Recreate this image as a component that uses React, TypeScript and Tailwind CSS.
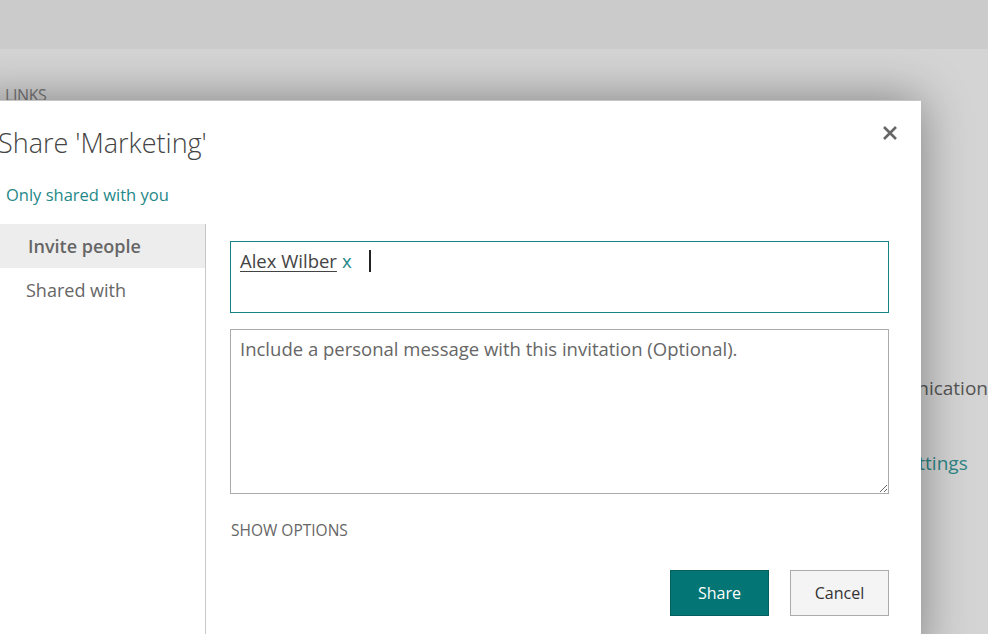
import { useState } from "react";

const font = { fontFamily: '"Open Sans", "Noto Sans", Arial, sans-serif' };

export default function App() {
  const [message, setMessage] = useState("");

  return (
    <div className="relative w-[988px] h-[634px] overflow-hidden bg-[#d4d4d4]" style={font}>
      {/* Suite bar */}
      <div className="relative z-20 h-[49px] bg-[#cbcbcb]" />

      {/* Page behind the dialog */}
      <div className="flex">
        <div className="w-[860px] pl-[5px] pt-[34px]">
          <div className="text-[16px] tracking-tight text-[#777]">LINKS</div>
        </div>
        <div className="flex flex-col pt-[325px] gap-[46px] text-[19px] whitespace-nowrap">
          <div className="text-[#555]">Communication</div>
          <div className="pl-[14px] text-[#2f8585]">Site settings</div>
        </div>
      </div>

      {/* Dialog */}
      <div className="absolute z-10 left-[-30px] top-[100px] w-[951px] h-[560px] bg-white border-t border-[#c6c6c6] shadow-[0_0_45px_rgba(0,0,0,0.4)]">
        <button className="absolute right-[20px] top-[21px] w-[22px] h-[22px] flex items-center justify-center text-[#666]">
          <svg width="16" height="16" viewBox="0 0 16 16">
            <path d="M2 2L14 14M14 2L2 14" stroke="currentColor" strokeWidth="2.6" strokeLinecap="butt" />
          </svg>
        </button>

        <h1 className="pl-[28px] pt-[24px] text-[27px] font-light text-[#444] leading-[36px]">
          Share 'Marketing'
        </h1>
        <div className="pl-[36px] pt-[22px] text-[16.5px] text-[#1f8888] leading-[24px]">
          Only shared with you
        </div>

        <div className="flex mt-[17px]">
          {/* Side nav */}
          <div className="w-[236px] border-r border-[#c8c8c8] h-[420px]">
            <div className="h-[44px] bg-[#ededed] flex items-center pl-[58px] text-[18px] font-semibold text-[#666]">
              Invite people
            </div>
            <div className="h-[44px] flex items-center pl-[56px] text-[18px] text-[#666]">
              Shared with
            </div>
          </div>

          {/* Invite form */}
          <div className="flex flex-col pl-[24px] pt-[17px] w-[683px]">
            <div className="h-[72px] border border-[#168383] px-[9px] pt-[6px] flex items-start">
              <span className="text-[18.5px] text-[#444] underline underline-offset-[3px] leading-[26px]">Alex Wilber</span>
              <span className="ml-[5px] text-[18.5px] text-[#1f8888] leading-[26px]">x</span>
              <span className="ml-[17px] mt-[2px] w-[2px] h-[22px] bg-[#222]" />
            </div>

            <textarea
              value={message}
              onChange={(e) => setMessage(e.target.value)}
              placeholder="Include a personal message with this invitation (Optional)."
              className="mt-[16px] h-[165px] border border-[#ababab] px-[9px] pt-[5px] text-[18.5px] text-[#444] placeholder:text-[#666] outline-none resize-y"
            />

            <div className="mt-[25px] pl-[1px] text-[15.5px] text-[#666]">SHOW OPTIONS</div>

            <div className="mt-[28px] flex justify-end gap-[21px]">
              <button className="w-[99px] h-[46px] bg-[#037575] border border-[#025f5f] text-white text-[16px]">
                Share
              </button>
              <button className="w-[99px] h-[46px] bg-[#f4f4f4] border border-[#ababab] text-[#333] text-[16px]">
                Cancel
              </button>
            </div>
          </div>
        </div>
      </div>
    </div>
  );
}
